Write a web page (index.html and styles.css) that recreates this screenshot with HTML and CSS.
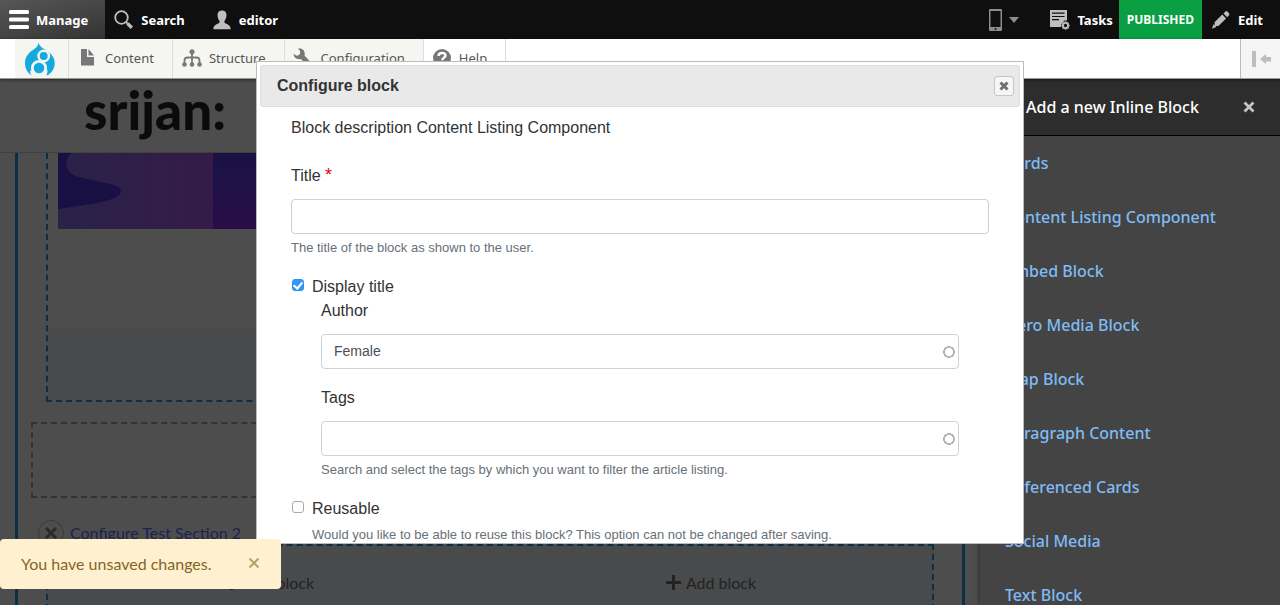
FILE: index.html
```html
<!DOCTYPE html>
<html lang="en">
<head>
<meta charset="utf-8">
<title>Configure block</title>
<link rel="stylesheet" href="styles.css">
</head>
<body>
<nav class="bar" aria-label="Administration">
  <a class="bar-item bar-item-active" href="#">
    <svg width="20" height="20" viewBox="0 0 20 20" fill="#fff"><rect y="0" width="20" height="4" rx="1.5"/><rect y="7.500" width="20" height="4" rx="1.5"/><rect y="15" width="20" height="4" rx="1.500"/></svg>
    Manage</a>
  <a class="bar-item bar-search" href="#">
    <svg width="20" height="20" viewBox="0 0 20 20" fill="none" stroke="#bebebe"><circle cx="7.500" cy="7.500" r="6.300" stroke-width="1.800"/><path d="M12 12l1.500 1.500" stroke-width="2"/><path d="M13.500 13.500l4.300 4.300" stroke-width="3.400"/></svg>
    Search</a>
  <a class="bar-item" href="#">
    <svg width="20" height="20" viewBox="0 0 20 20" fill="#bebebe"><path d="M10 0.500c3 0 4.500 1.800 4.500 4.800 0 2-.8 4.400-2 5.700-.4 1.200 0 2 1.200 2.500 2.200 1 4.800 1.700 5 5.800H1.300c.2-4.100 2.800-4.800 5-5.800 1.200-.5 1.600-1.300 1.200-2.500-1.200-1.300-2-3.700-2-5.700 0-3 1.500-4.800 4.500-4.800z"/></svg>
    editor</a>
  <div class="bar-end">
    <button class="bar-item bar-device" type="button" aria-label="Layout preview">
      <svg width="13" height="22" viewBox="0 0 13 22"><rect width="13" height="22" rx="1" fill="#8c8c8c"/><rect x="1.500" y="2" width="10" height="16" fill="#0f0f0f"/><circle cx="6.500" cy="20" r="1" fill="#0f0f0f"/></svg>
      <svg width="10" height="6" viewBox="0 0 10 6"><path d="M0 0h10L5 6z" fill="#8c8c8c"/></svg>
    </button>
    <a class="bar-item bar-tasks" href="#">
      <svg width="20" height="20" viewBox="0 0 20 20"><path d="M0 0h17v10.500h-2.500L11 14.500v2.500H0z" fill="#bebebe"/><path d="M2 3.200h12.500M2 6.500h12.500M2 9.700h7" stroke="#0f0f0f" stroke-width="1.200"/><circle cx="15.500" cy="15.500" r="2.600" fill="none" stroke="#bebebe" stroke-width="1.900"/><path d="M15.500 11.300v1.700M15.500 18v1.700M11.300 15.500H13M18 15.500h1.700M12.500 12.500l1.200 1.200M17.300 17.300l1.200 1.200M18.500 12.500l-1.200 1.200M13.700 17.300l-1.200 1.200" stroke="#bebebe" stroke-width="1.500"/></svg>
      Tasks</a>
    <a class="bar-state" href="#">PUBLISHED</a>
    <a class="bar-item bar-edit" href="#">
      <svg width="18" height="18" viewBox="0 0 18 18" fill="#bebebe"><path d="M2.500 11.200l7.800-7.600 3.800 3.900-7.700 7.500-3.400-.2zM11.500 2.500L13.500.6c.7-.7 1.200-.6 1.800 0L17 2.300c.6.600.6 1.200 0 1.900l-1.800 2zM1.600 13l2.800 2.900L0 17.800z"/></svg>
      Edit</a>
  </div>
</nav>

<nav class="tray" aria-label="Manage">
  <a class="tray-home" href="#" aria-label="Home">
    <svg width="30" height="34" viewBox="0 0 30 34"><path d="M13.500 0c1 3.200 3.400 4.600 6.500 6.600 5.300 3.300 9.700 7.300 9.700 13.400 0 5-2.500 9.500-6.700 12-1 .6-1.800.2-1.300-.7 1-1.800.8-3.300.3-5-2.500 3-12.500 3-16.300 1-1 1.800-.5 3.700 1 5.300-4.300-2.800-6.700-7.300-6.700-12.600C0 14 3.500 10 7.600 7.200 10.500 5.300 13 3.500 13.500 0z" fill="#14aade"/><circle cx="14" cy="25" r="6.700" fill="#14aade" stroke="#f5f5f2" stroke-width="2.800"/><circle cx="18.700" cy="13" r="5.200" fill="#14aade" stroke="#f5f5f2" stroke-width="2.500"/></svg>
  </a>
  <a class="tray-item" href="#">
    <svg width="14" height="17" viewBox="0 0 14 17" fill="#777"><path d="M0 0h6v8h7v8.500H0zM7.500 0L13 6.500H7.500z"/></svg>
    Content</a>
  <a class="tray-item tray-tight" href="#">
    <svg width="20" height="18" viewBox="0 0 20 18" fill="#777"><circle cx="10" cy="2.700" r="2.500"/><circle cx="2.500" cy="15.500" r="2.300"/><circle cx="10" cy="15.500" r="2.300"/><circle cx="17.500" cy="15.500" r="2.300"/><path d="M10 3v12M2.500 15v-3.500q0-3 3-3h9q3 0 3 3V15" fill="none" stroke="#777" stroke-width="1.800"/></svg>
    Structure</a>
  <a class="tray-item tray-config" href="#">
    <svg width="18" height="20" viewBox="0 0 18 20" fill="#777"><path d="M4.800.8C9-.8 12.800 2.800 11.500 7.500l5.500 6c2 2.200-1 5.200-3.200 3.200l-6-5.700C4 12 .5 9.500.6 5.600c1.300 1.700 3 2.400 4.400 1.900C7 6.700 7.500 5 7 3.500 6.700 2.300 6 1.400 4.800.8z"/></svg>
    Configuration</a>
  <a class="tray-item tray-help" href="#">
    <svg width="18" height="18" viewBox="0 0 18 18"><circle cx="9" cy="9" r="9" fill="#777"/><path d="M5.500 7c.2-4 7-4 7-.4 0 2.300-3.300 2.200-3.300 4.700" fill="none" stroke="#fff" stroke-width="2.400"/><circle cx="9.200" cy="14" r="1.400" fill="#fff"/></svg>
    Help</a>
  <button class="tray-toggle" type="button" aria-label="Vertical orientation">
    <svg width="20" height="16" viewBox="0 0 20 16" fill="#bdbdbd"><path d="M1 0h4v16H1zM9 8l6-5v3h5v4.500h-5V13z"/></svg>
  </button>
</nav>

<div class="stage">
  <main class="canvas">
    <header class="brand"><a class="brand-name" href="#">srijan:</a></header>
    <div class="sections">
      <section class="region region-first">
        <svg class="hero" width="380" height="76" viewBox="0 0 380 76">
          <defs><linearGradient id="dusk"><stop offset="0" stop-color="#292249"/><stop offset="1" stop-color="#351b48"/></linearGradient><linearGradient id="night" x2="0" y2="1"><stop offset="0" stop-color="#191344"/><stop offset="1" stop-color="#290d48"/></linearGradient></defs>
          <rect width="155" height="76" fill="url(#dusk)"/><rect x="155" width="225" height="76" fill="url(#night)"/>
          <path d="M0 0h13C6 7 7 17 14 21c14 8 49 8 49 17 0 10-30 13-63 18z" fill="#180f43"/>
        </svg>
        <div class="region-add"></div>
      </section>
      <div class="section-gap"></div>
      <div class="section-tools">
        <button class="section-remove" type="button" aria-label="Remove section"><svg width="14" height="14" viewBox="0 0 14 14"><path d="M2 2l10 10M12 2L2 12" stroke="#2b2b2b" stroke-width="3"/></svg></button>
        <a class="section-link" href="#">Configure Test Section 2</a>
      </div>
      <section class="region columns">
        <a class="column" href="#"><svg width="15" height="15" viewBox="0 0 15 15"><path d="M7.500 0v15M0 7.500h15" stroke="#222" stroke-width="3"/></svg>Add block</a>
        <a class="column" href="#"><svg width="15" height="15" viewBox="0 0 15 15"><path d="M7.500 0v15M0 7.500h15" stroke="#222" stroke-width="3"/></svg>Add block</a>
      </section>
    </div>
  </main>

  <aside class="side">
    <header class="side-head">
      <h2 class="side-title">Add a new Inline Block</h2>
      <button class="side-close" type="button" aria-label="Close"><svg width="12" height="12" viewBox="0 0 12 12"><path d="M1.500 1.500l9 9M10.500 1.500l-9 9" stroke="#c4c4c4" stroke-width="2.800"/></svg></button>
    </header>
    <ul class="side-list">
      <li><a href="#">Cards</a></li>
      <li><a href="#">Content Listing Component</a></li>
      <li><a href="#">Embed Block</a></li>
      <li><a href="#">Hero Media Block</a></li>
      <li><a href="#">Map Block</a></li>
      <li><a href="#">Paragraph Content</a></li>
      <li><a href="#">Referenced Cards</a></li>
      <li><a href="#">Social Media</a></li>
      <li><a href="#">Text Block</a></li>
    </ul>
  </aside>
</div>

<div class="dialog" role="dialog" aria-labelledby="dialog-title">
  <header class="dialog-head">
    <h1 class="dialog-title" id="dialog-title">Configure block</h1>
    <button class="dialog-close" type="button" aria-label="Close"><svg width="10" height="10" viewBox="0 0 10 10"><path d="M1.500 1.500l7 7M8.500 1.500l-7 7" stroke="#6e6e6e" stroke-width="3"/></svg></button>
  </header>
  <form class="form">
    <p class="line">Block description Content Listing Component</p>
    <div class="field">
      <label class="line" for="title">Title <span class="required">*</span></label>
      <input class="text" id="title" type="text">
      <p class="hint">The title of the block as shown to the user.</p>
    </div>
    <div class="check">
      <input class="tick" id="display" type="checkbox" checked>
      <label class="line" for="display">Display title</label>
    </div>
    <div class="group">
      <div class="field">
        <label class="line" for="author">Author</label>
        <input class="text text-auto" id="author" type="text" value="Female">
      </div>
      <div class="field">
        <label class="line" for="tags">Tags</label>
        <input class="text text-auto" id="tags" type="text">
        <p class="hint">Search and select the tags by which you want to filter the article listing.</p>
      </div>
    </div>
    <div class="check">
      <input class="tick" id="reusable" type="checkbox">
      <label class="line" for="reusable">Reusable</label>
    </div>
    <p class="hint hint-check">Would you like to be able to reuse this block? This option can not be changed after saving.</p>
  </form>
</div>

<div class="toast" role="status">
  <span>You have unsaved changes.</span>
  <button class="toast-close" type="button" aria-label="Dismiss"><svg width="10" height="10" viewBox="0 0 10 10"><path d="M.5.5l9 9M9.500.5l-9 9" stroke="#b9a069" stroke-width="2"/></svg></button>
</div>
</body>
</html>
```
FILE: styles.css
```css
* { box-sizing: border-box; }
body {
  display: flex;
  flex-direction: column;
  height: 100vh;
  margin: 0;
  overflow: hidden;
  background: #4d4d4d;
  font-family: "Liberation Sans", Arial, sans-serif;
}
a { color: inherit; text-decoration: none; }
button { padding: 0; border: 0; background: none; cursor: pointer; }
h1, h2, p, ul { margin: 0; padding: 0; }
svg { display: block; flex: none; }

.bar {
  display: flex;
  flex: none;
  height: 39px;
  background: #0f0f0f;
  color: #fff;
  font: 700 13px "Noto Sans", "Open Sans", sans-serif;
}
.bar-item { display: flex; align-items: center; gap: 7px; padding: 0 17px 0 9px; }
.bar-item-active { background: linear-gradient(90deg, rgba(255,255,255,.08), transparent), linear-gradient(#484848, #333); }
.bar-search { padding-right: 18px; }
.bar-end { display: flex; margin-left: auto; }
.bar-device { padding: 0 31px 0 0; }
.bar-tasks { padding: 0 6px 0 0; }
.bar-edit { gap: 8px; padding-left: 10px; }
.bar-state { display: flex; align-items: center; padding: 0 8px; background: #0b9f44; font-size: 12px; }

.tray {
  display: flex;
  flex: none;
  position: relative;
  height: 40px;
  padding-left: 15px;
  border-bottom: 1px solid #999;
  background: #fff;
  box-shadow: 0 1px 3px rgba(0,0,0,.5);
  color: #565656;
  font: 13px "Noto Sans", "Open Sans", sans-serif;
}
.tray-home { display: flex; align-items: center; padding: 3px 13px 0 10px; background: #f5f5f2; }
.tray-home, .tray-item { border-right: 1px solid #ddd; }
.tray-item { display: flex; align-items: center; gap: 10px; padding: 0 18px 2px 12px; background: #f5f5f2; }
.tray-tight { gap: 7px; padding: 0 18px 2px 9px; }
.tray-config { padding-left: 8px; }
.tray-help { gap: 8px; padding-left: 9px; background: #fff; }
.tray-toggle { display: flex; align-items: center; margin-left: auto; padding: 0 9px 0 10px; border-left: 1px solid #bbb; background: #f5f5f5; }

.stage { display: flex; flex: 1; min-height: 0; }
.canvas { flex: 1; overflow: hidden; font: 16px Lato, sans-serif; }
.brand { height: 74px; padding-left: 84px; border-bottom: 1px solid #404040; }
.brand-name { display: block; color: #0b0b0b; font-size: 53px; font-weight: 900; line-height: 62px; }
.sections { margin: 0 15px; padding: 0 13px; border: solid #0d2f45; border-width: 0 3px; }
.region { border: 2px dashed #0d2f45; }
.region-first { display: flex; flex-direction: column; justify-content: space-between; height: 249px; margin: 0 15px; border-top: 0; }
.hero { margin-left: 10px; }
.region-add { height: 72px; background: #494a4c; }
.section-gap { height: 76px; margin-top: 20px; border: 2px dashed #333; }
.section-tools { display: flex; gap: 6px; height: 46px; padding: 22px 7px 0; color: #1a2350; line-height: 26px; }
.section-remove { display: grid; place-items: center; flex: none; width: 26px; height: 26px; border: 1px solid #3a3a3a; border-radius: 50%; }
.columns { display: grid; grid-template-columns: 1fr 1fr; margin: 0 15px; background: #494a4c; }
.column { display: flex; align-items: center; justify-content: center; gap: 5px; height: 72px; color: #222; }

.side { width: 300px; background: #444; box-shadow: -1px 0 4px rgba(0,0,0,.4); font: 500 16px "Noto Sans", "Open Sans", sans-serif; }
.side-head { display: flex; align-items: center; justify-content: space-between; height: 57px; padding: 0 25px 0 46px; border-bottom: 1px solid #000; background: #2d2d2d; color: #fff; }
.side-title { font-size: 16px; font-weight: 500; }
.side-list { list-style: none; color: #7fbcf5; line-height: 54px; }
.side-list a { display: block; padding-left: 25px; }

.dialog {
  position: fixed;
  top: 61px;
  right: 20%;
  bottom: 61px;
  left: 20%;
  padding: 3px;
  overflow: hidden;
  border: 1px solid #bbb;
  background: #fff;
  color: #333;
}
.dialog-head { display: flex; align-items: center; justify-content: space-between; height: 42px; padding: 0 5px 0 16px; border: 1px solid #ddd; border-radius: 3px; background: #e9e9e9; }
.dialog-title { font-size: 16px; }
.dialog-close { display: grid; place-items: center; width: 20px; height: 20px; border: 1px solid #c5c5c5; border-radius: 3px; background: #f6f6f6; }
.form { padding: 9px 31px 0; }
.line { display: block; font-size: 16px; line-height: 24px; }
.required { color: #e3001b; font-size: 18px; line-height: 20px; }
.field { margin-top: 24px; }
.text {
  display: block;
  width: 100%;
  height: 35px;
  margin-top: 11px;
  padding: 0 12px 2px;
  border: 1px solid #ced0da;
  border-radius: 4px;
  background: #fff;
  color: #495057;
  font: 14px "Liberation Sans", Arial, sans-serif;
}
.text-auto { background: radial-gradient(circle, transparent 4px, #b5b5b5 4px, #b5b5b5 6px, transparent 6px) right 2px center / 14px 14px no-repeat #fff; }
.hint { margin-top: 4px; color: #687078; font-size: 13px; line-height: 20px; }
.check { display: flex; gap: 8px; margin-top: 17px; }
.tick { appearance: none; width: 12px; height: 12px; margin: 4px 0 0 1px; border: 1px solid #a9a9a9; border-radius: 3px; background: #fff; }
.tick:checked { border-color: #2a8ff0; background: #3198f6; }
.tick:checked::after { content: ""; display: block; width: 4px; height: 7px; margin: 0 auto; border: solid #fff; border-width: 0 2px 2px 0; transform: rotate(40deg); }
.group { padding: 0 30px; }
.group .field:first-child { margin-top: 0; }
.group .field:last-child { margin-top: 17px; }
.hint-check { padding-left: 21px; }

.toast {
  display: flex;
  align-items: center;
  gap: 37px;
  position: fixed;
  bottom: 16px;
  left: 0;
  height: 50px;
  padding: 0 22px 2px 21px;
  border-radius: 4px;
  background: #fff1cf;
  color: #856427;
  font: 16px Lato, sans-serif;
}
```
